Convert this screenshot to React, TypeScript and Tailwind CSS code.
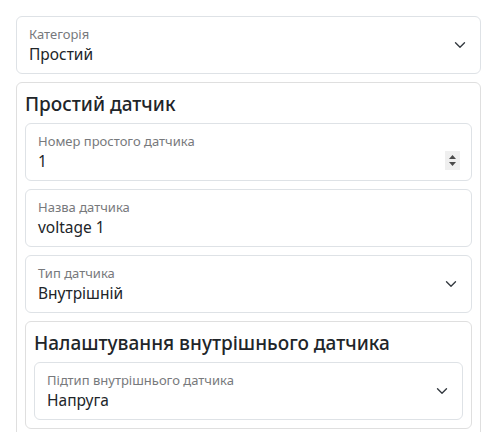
import React from "react";

const font = { fontFamily: '"Segoe UI", "Noto Sans", "Open Sans", sans-serif' };

function Chevron() {
  return (
    <svg width="16" height="12" viewBox="0 0 16 16" className="absolute right-[12px] top-1/2 -translate-y-1/2">
      <path d="m2 5 6 6 6-6" fill="none" stroke="#343a40" strokeWidth="1.8" strokeLinecap="round" strokeLinejoin="round" />
    </svg>
  );
}

function Spinner() {
  return (
    <div className="absolute right-[11px] top-[27px] w-[15px] h-[19px] bg-[#efefef] flex flex-col items-center justify-center gap-[3px]">
      <svg width="7" height="4" viewBox="0 0 7 4"><path d="M3.5 0 L7 4 L0 4 Z" fill="#4a4a4a" /></svg>
      <svg width="7" height="4" viewBox="0 0 7 4"><path d="M0 0 L7 0 L3.5 4 Z" fill="#4a4a4a" /></svg>
    </div>
  );
}

function Field({ label, value, kind }: { label: string; value: string; kind?: "select" | "number" }) {
  return (
    <div className="relative shrink-0 h-[58px] border border-[#dee2e6] rounded-[6px] bg-white pl-[12px] pt-[9px] flex flex-col">
      <div className="text-[13px] leading-[16px] text-[#77797c]">{label}</div>
      <div className="text-[15.5px] leading-[24px] text-[#212529]">{value}</div>
      {kind === "select" && <Chevron />}
      {kind === "number" && <Spinner />}
    </div>
  );
}

export default function App() {
  return (
    <div style={font} className="w-[497px] h-[432px] overflow-hidden bg-white p-4 flex flex-col gap-2">
      <Field label="Категорія" value="Простий" kind="select" />
      <div className="shrink-0 border border-[#dfdfdf] rounded-[6px] p-2 flex flex-col gap-2">
        <h5 className="shrink-0 pt-[3px] text-[19px] leading-[21px] font-medium text-[#212529]">Простий датчик</h5>
        <Field label="Номер простого датчика" value="1" kind="number" />
        <Field label="Назва датчика" value="voltage 1" />
        <Field label="Тип датчика" value="Внутрішній" kind="select" />
        <div className="shrink-0 border border-[#dfdfdf] rounded-[6px] p-2 flex flex-col gap-2">
          <h5 className="shrink-0 pt-[3px] text-[19px] leading-[21px] font-medium text-[#212529]">Налаштування внутрішнього датчика</h5>
          <Field label="Підтип внутрішнього датчика" value="Напруга" kind="select" />
        </div>
        <div className="h-10 shrink-0" />
      </div>
    </div>
  );
}
